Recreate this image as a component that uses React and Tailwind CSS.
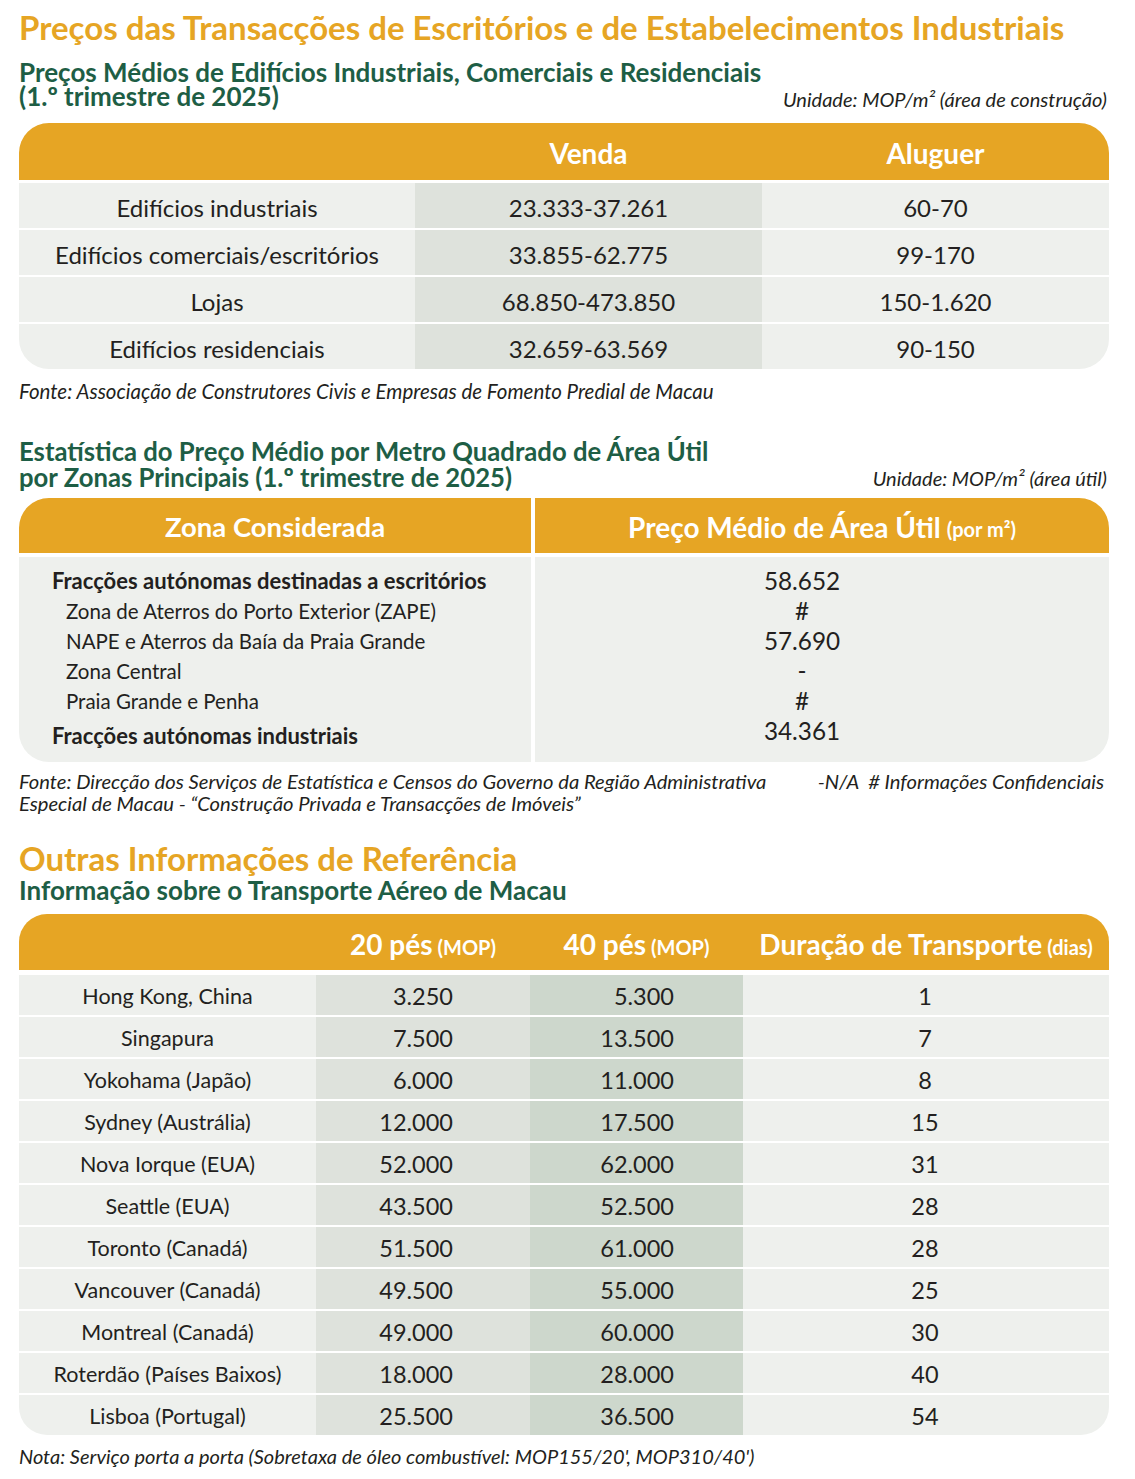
import React from "react";

const font = { fontFamily: "Lato, 'Open Sans', sans-serif" };

const precos = [
  ["Edifícios industriais", "23.333-37.261", "60-70"],
  ["Edifícios comerciais/escritórios", "33.855-62.775", "99-170"],
  ["Lojas", "68.850-473.850", "150-1.620"],
  ["Edifícios residenciais", "32.659-63.569", "90-150"],
];

const zonas = [
  { label: "Fracções autónomas destinadas a escritórios", value: "58.652", bold: true },
  { label: "Zona de Aterros do Porto Exterior (ZAPE)", value: "#" },
  { label: "NAPE e Aterros da Baía da Praia Grande", value: "57.690" },
  { label: "Zona Central", value: "-" },
  { label: "Praia Grande e Penha", value: "#" },
  { label: "Fracções autónomas industriais", value: "34.361", bold: true },
];

const transporte = [
  ["Hong Kong, China", "3.250", "5.300", "1"],
  ["Singapura", "7.500", "13.500", "7"],
  ["Yokohama (Japão)", "6.000", "11.000", "8"],
  ["Sydney (Austrália)", "12.000", "17.500", "15"],
  ["Nova Iorque (EUA)", "52.000", "62.000", "31"],
  ["Seattle (EUA)", "43.500", "52.500", "28"],
  ["Toronto (Canadá)", "51.500", "61.000", "28"],
  ["Vancouver (Canadá)", "49.500", "55.000", "25"],
  ["Montreal (Canadá)", "49.000", "60.000", "30"],
  ["Roterdão (Países Baixos)", "18.000", "28.000", "40"],
  ["Lisboa (Portugal)", "25.500", "36.500", "54"],
];

const App = () => {
  return (
    <div className="w-[1135px] bg-white pt-[8px] pb-[10px] text-[#231f20]" style={font}>
      <div className="ml-[19px] w-[1090px]">
        {/* Secção 1 */}
        <h1 className="text-[33px] font-bold leading-[38px] text-[#e6a524]">
          Preços das Transacções de Escritórios e de Estabelecimentos Industriais
        </h1>
        <div className="mt-[14px] flex items-end justify-between">
          <h2 className="text-[26px] font-bold leading-[24px] text-[#1e5e45]">
            Preços Médios de Edifícios Industriais, Comerciais e Residenciais
            <br />
            (1.º trimestre de 2025)
          </h2>
          <p className="pr-[2px] text-[20px] italic leading-[18px]">
            Unidade: MOP/m² (área de construção)
          </p>
        </div>

        <div className="mt-[15px] flex flex-col overflow-hidden rounded-[30px] bg-white">
          <div className="grid h-[57px] grid-cols-[396px_347px_347px] items-center bg-[#e6a524] pt-[3px] text-[28px] font-bold text-white">
            <div />
            <div className="text-center">Venda</div>
            <div className="text-center">Aluguer</div>
          </div>
          <div className="mt-[3px] flex flex-col gap-[2px]">
            {precos.map((row) => (
              <div key={row[0]} className="grid h-[45px] grid-cols-[396px_347px_347px] text-[24px]">
                <div className="flex items-center justify-center bg-[#eef0ed] pt-[4px]">{row[0]}</div>
                <div className="flex items-center justify-center bg-[#dee2dc] pt-[4px]">{row[1]}</div>
                <div className="flex items-center justify-center bg-[#eef0ed] pt-[4px]">{row[2]}</div>
              </div>
            ))}
          </div>
        </div>
        <p className="mt-[10px] text-[20.5px] italic leading-[24px]">
          Fonte: Associação de Construtores Civis e Empresas de Fomento Predial de Macau
        </p>

        {/* Secção 2 */}
        <div className="mt-[35px] flex items-end justify-between">
          <h2 className="text-[25.7px] font-bold leading-[26px] text-[#1e5e45]">
            Estatística do Preço Médio por Metro Quadrado de Área Útil
            <br />
            por Zonas Principais (1.º trimestre de 2025)
          </h2>
          <p className="pr-[2px] text-[20px] italic leading-[24px]">Unidade: MOP/m² (área útil)</p>
        </div>

        <div className="mt-[8px] overflow-hidden rounded-[30px]">
          <div className="grid h-[55px] grid-cols-[512px_574px] gap-x-[4px] font-bold text-white">
            <div className="flex items-center justify-center bg-[#e6a524] pt-[2px] text-[27.5px]">
              Zona Considerada
            </div>
            <div className="flex items-center justify-center bg-[#e6a524] pt-[2px] text-[28px]">
              Preço Médio de Área Útil
              <span className="ml-[6px] mt-[5px] text-[20px]">(por m²)</span>
            </div>
          </div>
          <div className="mt-[4px] grid h-[205px] grid-cols-[512px_574px] gap-x-[4px]">
            <div className="bg-[#eef0ed] pt-[9px] pl-[33px] leading-[30px]">
              {zonas.map((z, i) => (
                <div
                  key={z.label}
                  className={
                    z.bold
                      ? i > 0
                        ? "mt-[5px] text-[22px] font-bold"
                        : "text-[22px] font-bold"
                      : "pl-[14px] text-[20.5px]"
                  }
                >
                  {z.label}
                </div>
              ))}
            </div>
            <div className="bg-[#eef0ed] pt-[9px] pr-[40px] text-center text-[24.3px] leading-[30px]">
              {zonas.map((z) => (
                <div key={z.label}>{z.value}</div>
              ))}
            </div>
          </div>
        </div>
        <div className="mt-[8px] flex justify-between text-[20.2px] italic leading-[22px]">
          <p>
            Fonte: Direcção dos Serviços de Estatística e Censos do Governo da Região Administrativa
            <br />
            Especial de Macau - “Construção Privada e Transacções de Imóveis”
          </p>
          <p className="pr-[5px]">-N/A &nbsp;# Informações Confidenciais</p>
        </div>

        {/* Secção 3 */}
        <h1 className="mt-[26px] text-[33px] font-bold leading-[36px] text-[#e6a524]">
          Outras Informações de Referência
        </h1>
        <h2 className="text-[26px] font-bold leading-[28px] text-[#1e5e45]">
          Informação sobre o Transporte Aéreo de Macau
        </h2>

        <div className="mt-[10px] flex flex-col gap-[2px] overflow-hidden rounded-[28px]">
          <div className="mb-[3px] grid h-[56px] grid-cols-[297px_214px_213px_366px] items-center bg-[#e6a524] pt-[4px] font-bold text-white">
            <div />
            <div className="text-center text-[28px]">
              20 pés<span className="ml-[5px] text-[20px]">(MOP)</span>
            </div>
            <div className="text-center text-[28px]">
              40 pés<span className="ml-[5px] text-[20px]">(MOP)</span>
            </div>
            <div className="text-center text-[28px]">
              Duração de Transporte<span className="ml-[5px] text-[20px]">(dias)</span>
            </div>
          </div>
          {transporte.map((row) => (
            <div key={row[0]} className="grid h-[40px] grid-cols-[297px_214px_213px_366px] text-[23.5px]">
              <div className="flex items-center justify-center bg-[#eef0ed] pt-[3px] text-[21.5px]">{row[0]}</div>
              <div className="flex items-center justify-end bg-[#dee2dc] pt-[3px] pr-[77px]">{row[1]}</div>
              <div className="flex items-center justify-end bg-[#cdd7cc] pt-[3px] pr-[69px]">{row[2]}</div>
              <div className="flex items-center justify-center bg-[#eef0ed] pt-[3px] pr-[2px]">{row[3]}</div>
            </div>
          ))}
        </div>
        <p className="mt-[9px] text-[20px] italic leading-[24px]">
          Nota: Serviço porta a porta (Sobretaxa de óleo combustível: MOP155/20', MOP310/40')
        </p>
      </div>
    </div>
  );
};

export default App;
